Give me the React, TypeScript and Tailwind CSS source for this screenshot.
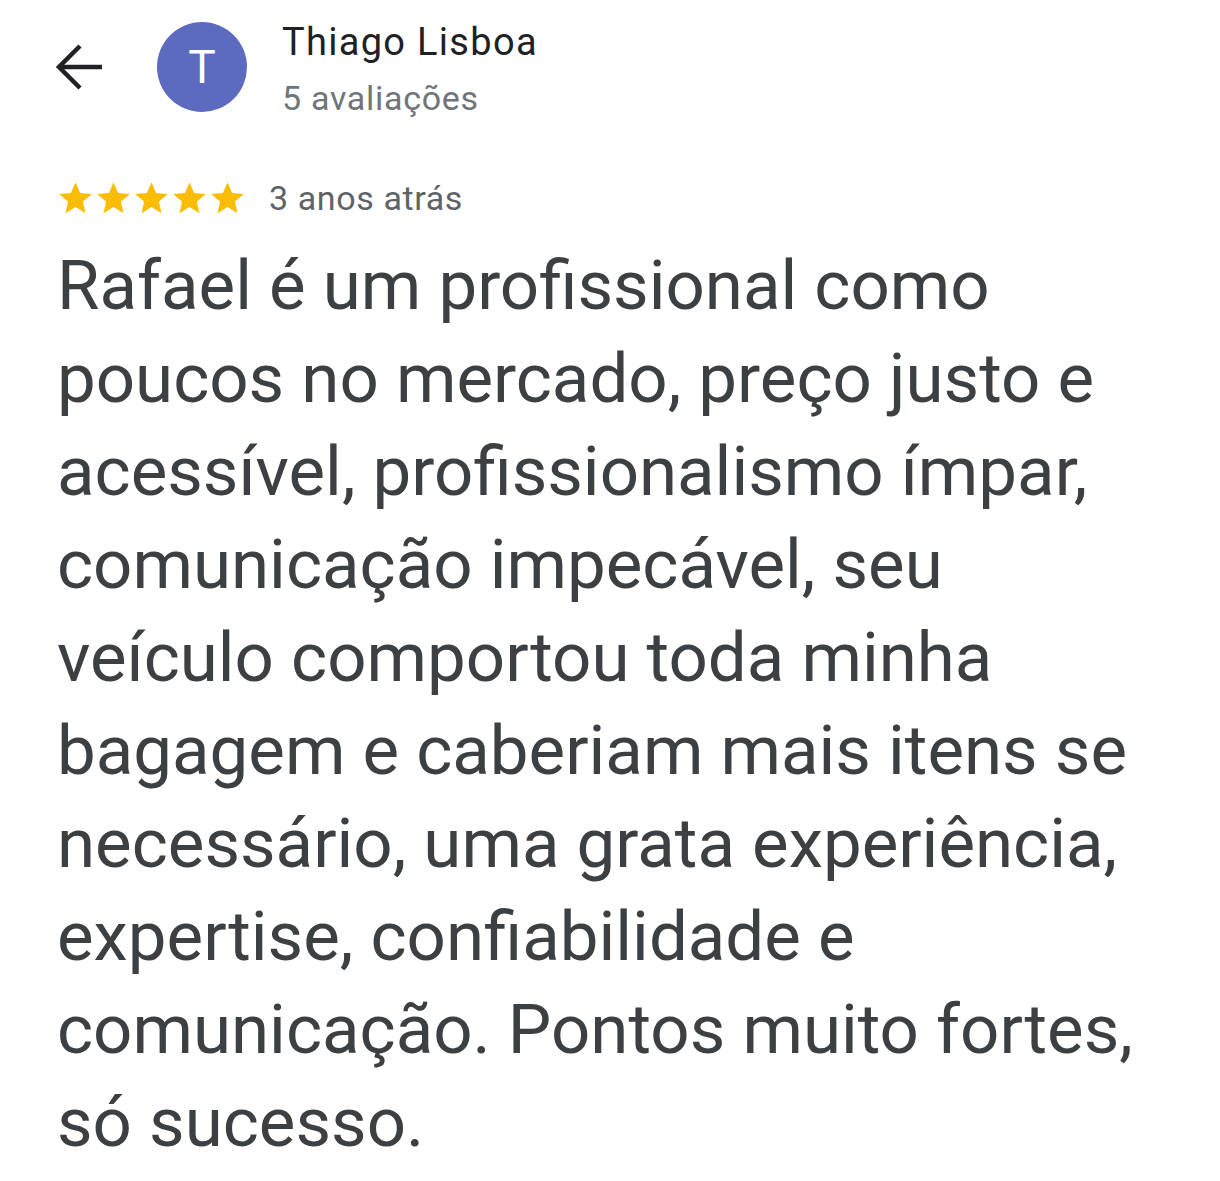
import React from "react";

const Star = () => (
  <svg width="39" height="39" viewBox="0 0 24 24" className="block -mx-[0.5px]">
    <path
      fill="#FBBC04"
      d="M12 17.27L18.18 21l-1.64-7.03L22 9.24l-7.19-.61L12 2 9.19 8.63 2 9.24l5.46 4.73L5.82 21z"
    />
  </svg>
);

export default function App() {
  return (
    <div
      className="w-[1220px] h-[1181px] bg-white overflow-hidden"
      style={{ fontFamily: "Roboto, 'Noto Sans', sans-serif" }}
    >
      <div className="flex items-start pl-[54px] pt-[22px]">
        <svg width="50" height="48" viewBox="0 0 50 48" className="block mt-[21px]">
          <g fill="none" stroke="#202124" strokeWidth="4.5" strokeLinecap="butt">
            <path d="M5 24 H48" />
            <path d="M26 3 L5 24 L26 45" strokeLinejoin="miter" />
          </g>
        </svg>
        <div className="ml-[53px] w-[90px] h-[90px] rounded-full bg-[#5c6bc0] flex items-center justify-center text-white text-[46px] leading-none">
          T
        </div>
        <div className="ml-[35px] flex flex-col -mt-[2px]">
          <div className="text-[38px] leading-[44px] text-[#202124] tracking-[1.3px]">
            Thiago Lisboa
          </div>
          <div className="text-[34px] leading-[40px] text-[#70757a] mt-[14px] tracking-[0.7px]">
            5 avaliações
          </div>
        </div>
      </div>
      <div className="flex items-center pl-[56px] mt-[60px]">
        <div className="flex">
          <Star />
          <Star />
          <Star />
          <Star />
          <Star />
        </div>
        <div className="ml-[23px] text-[34px] leading-[40px] text-[#5f6368] tracking-[0.6px]">
          3 anos atrás
        </div>
      </div>
      <div className="pl-[57px] pr-[40px] mt-[21px] text-[69px] leading-[93px] text-[#3c4043] whitespace-nowrap">
        Rafael é um profissional como
        <br />
        poucos no mercado, preço justo e
        <br />
        acessível, profissionalismo ímpar,
        <br />
        comunicação impecável, seu
        <br />
        veículo comportou toda minha
        <br />
        bagagem e caberiam mais itens se
        <br />
        necessário, uma grata experiência,
        <br />
        expertise, confiabilidade e
        <br />
        comunicação. Pontos muito fortes,
        <br />
        só sucesso.
      </div>
    </div>
  );
}
